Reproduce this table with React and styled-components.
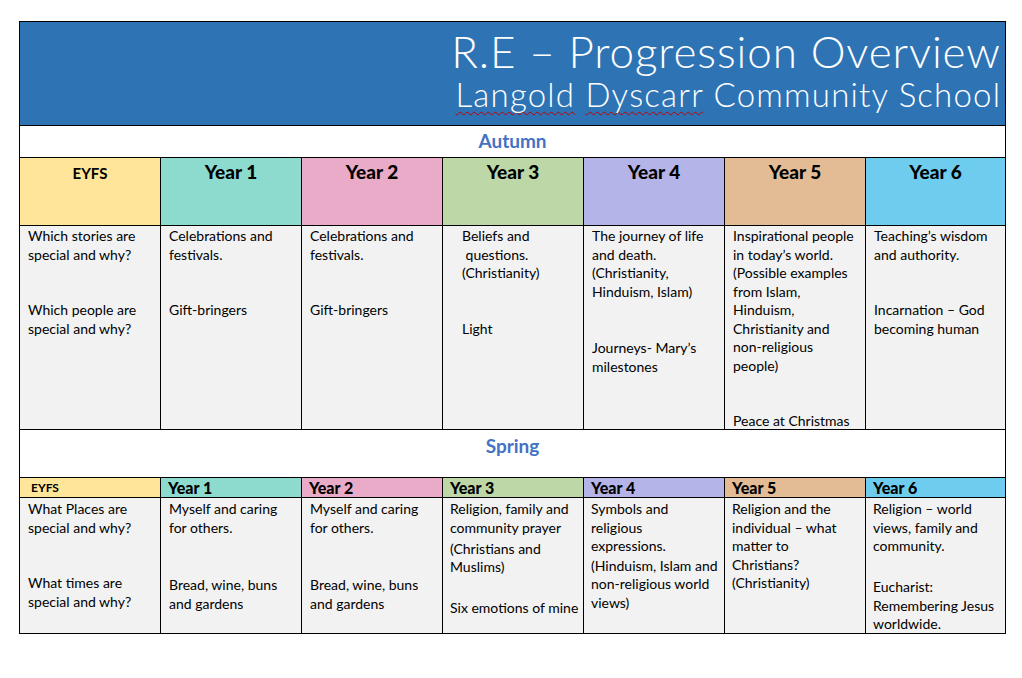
import React from "react";
import styled, { createGlobalStyle } from "styled-components";

const GlobalStyle = createGlobalStyle`
  html, body { margin: 0; padding: 0; background: #ffffff; }
  body { font-family: Lato, "Liberation Sans", sans-serif; color: #000; }
`;

const Page = styled.div`
  padding: 21px 0 0 19px;
`;

const Grid = styled.div`
  display: grid;
  grid-template-columns: repeat(6, 140px) 139px;
  grid-template-rows: 103px 31px 67px 203px 47px 19px 135px;
  gap: 1px;
  background: #000;
  border: 1px solid #000;
  width: fit-content;
`;

const TitleCell = styled.div`
  grid-column: 1 / -1;
  background: #2e74b5;
  color: #fff;
  text-align: right;
  padding: 4px 5px 0 0;
  font-family: Lato, "Noto Sans", sans-serif;
  font-weight: 300;
`;

const TitleLine = styled.div`
  font-size: ${(p) => p.$size}px;
  line-height: ${(p) => p.$lh}px;
  letter-spacing: ${(p) => p.$ls || 0}px;
  margin-right: ${(p) => -(p.$ls || 0)}px;
  white-space: nowrap;
`;

const Spell = styled.span`
  text-decoration: underline wavy #c00000;
  text-decoration-thickness: 1px;
  text-underline-offset: 4px;
  text-decoration-skip-ink: none;
`;

const TermCell = styled.div`
  grid-column: 1 / -1;
  background: #fff;
  color: #4472c4;
  text-align: center;
  font-family: Lato, "Liberation Sans", sans-serif;
  font-weight: 700;
  font-size: 19px;
  line-height: 24px;
  padding-top: ${(p) => p.$pt}px;
`;

const HeadCell = styled.div`
  background: ${(p) => p.$bg};
  font-family: Lato, "Liberation Sans", sans-serif;
  font-weight: ${(p) => (p.$big ? 900 : 700)};
  font-size: ${(p) => p.$size}px;
  line-height: ${(p) => p.$lh}px;
  text-align: ${(p) => (p.$center ? "center" : "left")};
  padding: ${(p) => p.$pad};
  white-space: nowrap;
`;

const BodyCell = styled.div`
  background: #f2f2f2;
  font-family: Lato, "Liberation Sans", sans-serif;
  font-size: 14px;
  line-height: 18.5px;
  padding: ${(p) => p.$pt}px 4px 0 ${(p) => p.$pl || 8}px;
  overflow: hidden;
`;

const Para = styled.p`
  margin: 0;
  margin-top: ${(p) => p.$mt || 0}px;
  white-space: pre;
`;

const colours = ["#ffe599", "#8ddbcf", "#eaabc8", "#bdd7a7", "#b4b4e8", "#e3bc96", "#6ecdee"];
const names = ["EYFS", "Year 1", "Year 2", "Year 3", "Year 4", "Year 5", "Year 6"];

const L = 18.5;

const autumn = [
  { paras: [{ t: "Which stories are\nspecial and why?" }, { t: "Which people are\nspecial and why?", mt: L * 2 }] },
  { paras: [{ t: "Celebrations and\nfestivals." }, { t: "Gift-bringers", mt: L * 2 }] },
  { paras: [{ t: "Celebrations and\nfestivals." }, { t: "Gift-bringers", mt: L * 2 }] },
  {
    pl: 19,
    paras: [{ t: "Beliefs and\n questions.\n(Christianity)" }, { t: "Light", mt: L * 2 }],
  },
  {
    paras: [
      { t: "The journey of life\nand death.\n(Christianity,\nHinduism, Islam)" },
      { t: "Journeys- Mary\u2019s\nmilestones", mt: L * 2 + 1 },
    ],
  },
  {
    paras: [
      {
        t: "Inspirational people\nin today\u2019s world.\n(Possible examples\nfrom Islam,\nHinduism,\nChristianity and\nnon-religious\npeople)",
      },
      { t: "Peace at Christmas", mt: L * 2 },
    ],
  },
  { paras: [{ t: "Teaching\u2019s wisdom\nand authority." }, { t: "Incarnation \u2013 God\nbecoming human", mt: L * 2 }] },
];

const spring = [
  { paras: [{ t: "What Places are\nspecial and why?" }, { t: "What times are\nspecial and why?", mt: L * 2 }] },
  { paras: [{ t: "Myself and caring\nfor others." }, { t: "Bread, wine, buns\nand gardens", mt: L * 2 + 2 }] },
  { paras: [{ t: "Myself and caring\nfor others." }, { t: "Bread, wine, buns\nand gardens", mt: L * 2 + 2 }] },
  {
    pl: 7,
    paras: [
      { t: "Religion, family and\ncommunity prayer" },
      { t: "(Christians and\nMuslims)", mt: 2.5 },
      { t: "Six emotions of mine", mt: L + 4 },
    ],
  },
  {
    pl: 7,
    paras: [
      { t: "Symbols and\nreligious\nexpressions." },
      { t: "(Hinduism, Islam and\nnon-religious world\nviews)", mt: 1 },
    ],
  },
  {
    pl: 7,
    paras: [{ t: "Religion and the\nindividual \u2013 what\nmatter to\nChristians?\n(Christianity)" }],
  },
  {
    pl: 7,
    paras: [
      { t: "Religion \u2013 world\nviews, family and\ncommunity." },
      { t: "Eucharist:\nRemembering Jesus\nworldwide.", mt: L + 4 },
    ],
  },
];

function Cells({ data, pt }) {
  return data.map((c, i) => (
    <BodyCell key={i} $pt={pt} $pl={c.pl}>
      {c.paras.map((p, j) => (
        <Para key={j} $mt={p.mt}>
          {p.t}
        </Para>
      ))}
    </BodyCell>
  ));
}

export default function App() {
  return (
    <>
      <GlobalStyle />
      <Page>
        <Grid>
          <TitleCell>
            <TitleLine $size={44} $lh={50} $ls={0.9}>
              R.E – Progression Overview
            </TitleLine>
            <TitleLine $size={33} $lh={37} $ls={1.2}>
              <Spell>Langold</Spell> <Spell>Dyscarr</Spell> Community School
            </TitleLine>
          </TitleCell>

          <TermCell $pt={3}>Autumn</TermCell>

          {names.map((n, i) =>
            i === 0 ? (
              <HeadCell key={n} $bg={colours[i]} $center $size={15} $lh={20} $pad="5px 0 0 0">
                {n}
              </HeadCell>
            ) : (
              <HeadCell key={n} $bg={colours[i]} $center $big $size={19} $lh={24} $pad="2px 0 0 0">
                {n}
              </HeadCell>
            )
          )}

          <Cells data={autumn} pt={1} />

          <TermCell $pt={4}>Spring</TermCell>

          {names.map((n, i) =>
            i === 0 ? (
              <HeadCell key={n} $bg={colours[i]} $size={12} $lh={19} $pad="0 0 0 11px">
                {n}
              </HeadCell>
            ) : (
              <HeadCell key={n} $bg={colours[i]} $big $size={16} $lh={19} $pad="0 0 0 7px">
                {n}
              </HeadCell>
            )
          )}

          <Cells data={spring} pt={2} />
        </Grid>
      </Page>
    </>
  );
}
